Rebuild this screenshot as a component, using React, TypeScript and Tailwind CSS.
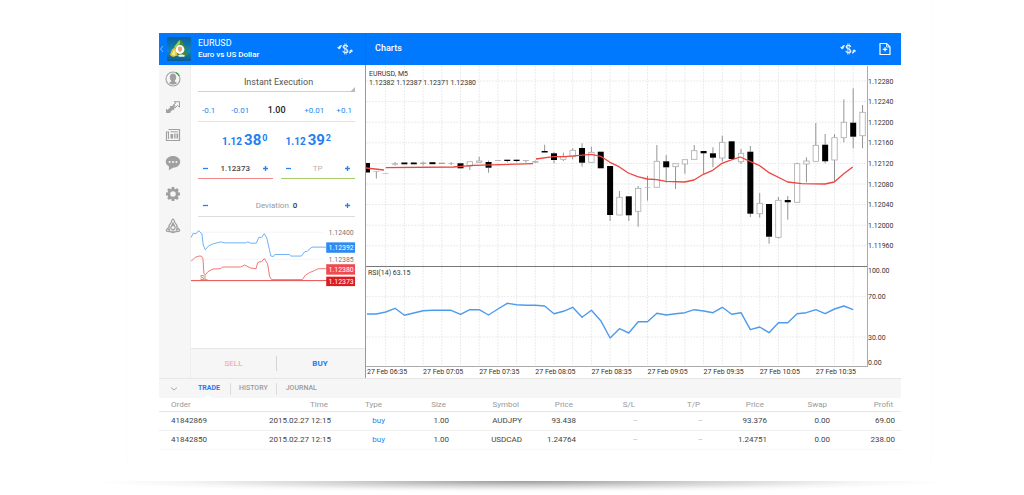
import { type ReactNode } from "react"

type Candle = {
  i: number
  top: number
  bottom: number
  high?: number
  low?: number
  fill: "down" | "up" | "flat"
}

const STEP = 9.35
const xAt = (i: number) => 1 + i * STEP

const candles: Candle[] = [
  { i: 0, top: 98, bottom: 107.5, fill: "down" },
  { i: 1, top: 106, bottom: 106.5, low: 113.5, fill: "flat" },
  { i: 2, top: 108, bottom: 108.5, fill: "flat" },
  { i: 3, top: 98.5, bottom: 99.5, high: 97, low: 100.5, fill: "flat" },
  { i: 4, top: 97.5, bottom: 99.3, fill: "down" },
  { i: 5, top: 97.5, bottom: 99.3, fill: "down" },
  { i: 6, top: 97.7, bottom: 98.8, high: 96.5, low: 100.5, fill: "flat" },
  { i: 7, top: 97.2, bottom: 99.2, fill: "down" },
  { i: 8, top: 97.7, bottom: 98.9, fill: "flat" },
  { i: 9, top: 98.5, bottom: 99, high: 97, low: 100, fill: "flat" },
  { i: 10, top: 98.3, bottom: 103.3, fill: "down" },
  { i: 11, top: 96.7, bottom: 101, low: 105, fill: "up" },
  { i: 12, top: 96, bottom: 97.3, high: 91.7, fill: "up" },
  { i: 13, top: 97, bottom: 102.7, high: 95.5, low: 107.7, fill: "down" },
  { i: 14, top: 95.3, bottom: 96, fill: "flat" },
  { i: 15, top: 94.7, bottom: 96, low: 97.3, fill: "down" },
  { i: 16, top: 94.7, bottom: 96, low: 97, fill: "down" },
  { i: 17, top: 95.3, bottom: 96, low: 97.5, fill: "flat" },
  { i: 18, top: 96.3, bottom: 97.5, high: 95.5, low: 98, fill: "flat" },
  { i: 19, top: 86, bottom: 87.5, high: 79.7, fill: "down" },
  { i: 20, top: 88.3, bottom: 95, high: 87, low: 98.3, fill: "down" },
  { i: 21, top: 91.7, bottom: 94.3, high: 87.7, low: 96, fill: "up" },
  { i: 22, top: 85.3, bottom: 91.7, high: 83.3, low: 94.3, fill: "up" },
  { i: 23, top: 83, bottom: 97.7, high: 78.3, low: 101.7, fill: "down" },
  { i: 24, top: 87.3, bottom: 97.3, high: 81.7, fill: "up" },
  { i: 25, top: 86.7, bottom: 103.3, fill: "down" },
  { i: 26, top: 101, bottom: 150, low: 156, fill: "down" },
  { i: 27, top: 132.3, bottom: 150, high: 126, fill: "up" },
  { i: 28, top: 131.3, bottom: 150.3, low: 156, fill: "down" },
  { i: 29, top: 123.3, bottom: 146.3, high: 121, low: 161.7, fill: "up" },
  { i: 30, top: 122.5, bottom: 123, high: 111, low: 135.7, fill: "flat" },
  { i: 31, top: 96.3, bottom: 122.3, high: 80, fill: "up" },
  { i: 32, top: 96.3, bottom: 102.3, high: 90, low: 117.7, fill: "down" },
  { i: 33, top: 98.7, bottom: 101.7, low: 124, fill: "up" },
  { i: 34, top: 94.7, bottom: 99, low: 108.7, fill: "up" },
  { i: 35, top: 85.7, bottom: 94.3, high: 80, fill: "up" },
  { i: 36, top: 86, bottom: 88.3, low: 108.7, fill: "down" },
  { i: 37, top: 88.3, bottom: 92.7, high: 82.3, low: 102.3, fill: "down" },
  { i: 38, top: 77.3, bottom: 93, high: 70.7, low: 96.7, fill: "up" },
  { i: 39, top: 76.3, bottom: 94, fill: "down" },
  { i: 40, top: 88.3, bottom: 96.7, high: 84, low: 99, fill: "up" },
  { i: 41, top: 86.7, bottom: 148.7, high: 81, low: 152, fill: "down" },
  { i: 42, top: 138.3, bottom: 148.7, high: 128, low: 152.7, fill: "up" },
  { i: 43, top: 139, bottom: 171.7, low: 178.7, fill: "down" },
  { i: 44, top: 135.3, bottom: 172.3, high: 132, low: 173.5, fill: "up" },
  { i: 45, top: 135, bottom: 137.3, high: 131, low: 154.7, fill: "down" },
  { i: 46, top: 98.7, bottom: 137.3, high: 97.7, fill: "up" },
  { i: 47, top: 96, bottom: 99, high: 92.3, low: 117.3, fill: "up" },
  { i: 48, top: 80.3, bottom: 96.3, high: 58, fill: "up" },
  { i: 49, top: 79.7, bottom: 96.3, high: 69, low: 98.3, fill: "down" },
  { i: 50, top: 72.7, bottom: 95, high: 69.3, low: 116.7, fill: "up" },
  { i: 51, top: 57.3, bottom: 72.7, high: 34.3, low: 77.3, fill: "up" },
  { i: 52, top: 57.7, bottom: 71.7, high: 23.3, low: 83.3, fill: "down" },
  { i: 53, top: 47.3, bottom: 70.7, high: 40, low: 83.3, fill: "up" },
]

const rsi = [
  249, 249, 247, 243.3, 250.3, 248, 245.7, 245.3, 245.3, 245.3, 249.3, 244.7, 244.7, 250, 244,
  238.3, 239.7, 240.3, 240.3, 241, 248.7, 246.3, 242.3, 252.3, 245.3, 255.7, 273, 263.7, 268,
  256.7, 256.7, 248.3, 250, 248.7, 247.7, 244.7, 246, 247.7, 242.3, 249.3, 247.7, 264.7, 262,
  267.7, 257.7, 257.7, 248.7, 247.7, 244.7, 248.7, 244, 241, 244.7,
]

const priceLevels = [
  "1.12280",
  "1.12240",
  "1.12200",
  "1.12160",
  "1.12120",
  "1.12080",
  "1.12040",
  "1.12000",
  "1.11960",
]

const times = ["06:35", "07:05", "07:35", "08:05", "08:35", "09:05", "09:35", "10:05", "10:35"]

const rsiLevels = [
  { label: "100.00", y: 208 },
  { label: "70.00", y: 234 },
  { label: "30.00", y: 275 },
  { label: "0.00", y: 300 },
]

const columns = [
  "Order",
  "Time",
  "Type",
  "Size",
  "Symbol",
  "Price",
  "S/L",
  "T/P",
  "Price",
  "Swap",
  "Profit",
]

const positions = [
  ["41842869", "2015.02.27 12:15", "buy", "1.00", "AUDJPY", "93.438", "–", "–", "93.376", "0.00", "69.00"],
  ["41842850", "2015.02.27 12:15", "buy", "1.00", "USDCAD", "1.24764", "–", "–", "1.24751", "0.00", "238.00"],
]

export default function App() {
  return (
    <main className="min-h-screen overflow-x-hidden bg-white pr-[92px] pl-[126px] font-[Roboto,'Liberation_Sans',sans-serif] text-[#444]">
      <div className="rounded-b-[26px] border-x border-[#fcfcfc] bg-white pt-[33px] pr-[30px] pb-[31px] pl-8">
        <TopBar />
        <div className="flex">
          <Sidebar />
          <OrderPanel />
          <div className="min-w-0 flex-1 border-l border-[#999]">
            <PriceChart />
          </div>
        </div>
        <Terminal />
      </div>
      <div
        aria-hidden="true"
        className="-mr-5 -ml-9 h-[11px] bg-[radial-gradient(ellipse_50%_100%_at_50%_0%,#9c9c9c_0%,#d4d4d4_45%,#f6f6f6_80%,#ffffff_100%)]"
      />
    </main>
  )
}

function TopBar() {
  return (
    <header className="flex h-8 bg-[#0079fe] text-white">
      <div className="flex w-[207px] shrink-0 items-center border-r border-[#0a6fe0] pr-3">
        <button type="button" aria-label="Back" className="w-2">
          <svg viewBox="0 0 8 12" className="h-3 w-2" fill="none" stroke="#7fbcff">
            <path d="M4 3 1.5 6 4 9" />
          </svg>
        </button>
        <AppLogo />
        <div className="ml-[7px] flex-1">
          <h1 className="text-[9px] leading-[12px] font-normal">EURUSD</h1>
          <p className="text-[8px] leading-[12px] font-medium">Euro vs US Dollar</p>
        </div>
        <button type="button" aria-label="Switch symbol">
          <CurrencyIcon />
        </button>
      </div>
      <div className="flex flex-1 items-center gap-[22px] pr-[9px] pl-[9px]">
        <h2 className="flex-1 text-[9px] font-medium">Charts</h2>
        <button type="button" aria-label="Select symbol">
          <CurrencyIcon />
        </button>
        <button type="button" aria-label="New order">
          <svg viewBox="0 0 14 14" className="size-[14px]" fill="none" stroke="#fff" strokeWidth="1.2">
            <path d="M2 1.5h6.5L12 5v7.5H2z" strokeLinejoin="round" />
            <path d="M8.5 1.5V5H12" strokeWidth="0.8" />
            <path d="M7 5.2v4.4M4.8 7.4h4.4" />
          </svg>
        </button>
      </div>
    </header>
  )
}

function CurrencyIcon() {
  return (
    <svg viewBox="0 0 16 14" className="h-[14px] w-4" fill="none" stroke="#e6f2ff" strokeLinecap="round">
      <path d="M10.6 4.4C10 3.2 6.2 2.9 6.2 5c0 2.1 4.6 1.5 4.6 3.9 0 2.2-4.2 2-4.8.5" strokeWidth="1.2" />
      <path d="M7.700 1.800v10.400M9.200 1.800v10.400" strokeWidth="0.7" />
      <path d="M4.200 3.800C3.100 4 2.300 4.800 2.200 6" strokeWidth="1.400" />
      <path d="M.9 5.600 2.200 7l1.500-1.400z" strokeWidth="0.8" fill="#e6f2ff" />
      <path d="M12.600 10.800c1-.3 1.500-1 1.600-2" strokeWidth="1.400" />
      <path d="M12.900 9l1.300-1.300L15.500 9z" strokeWidth="0.8" fill="#e6f2ff" />
    </svg>
  )
}

function AppLogo() {
  return (
    <svg viewBox="0 0 24 24" className="size-6" role="img" aria-label="Trading app">
      <defs>
        <linearGradient id="logo-sky" x1="0" y1="0" x2="0" y2="1">
          <stop offset="0" stopColor="#0d5f9c" />
          <stop offset="0.6" stopColor="#1487b9" />
          <stop offset="1" stopColor="#0c5b8e" />
        </linearGradient>
      </defs>
      <rect width="24" height="24" rx="1" fill="url(#logo-sky)" />
      <path d="M12.500 2.500c2.500 1 3.500 2.500 4 4.500l3 4.500-1 1.500 2.500 5-3.500 1.500-9-.5L5.500 13l3-5c1-1 2.500-3 4-5.500z" fill="#3d8a3f" />
      <path d="M12.500 3c.8 2 .8 4-.5 5.500l-3.500 3L7 10z" fill="#9ccb55" />
      <path d="M2.800 18 5 12.500l2.500-2 2.300 3 .7 5-4.500 1.500z" fill="#dcc236" />
      <path d="M4.500 17.500 7 12.800l1.500 2-.5 4.200z" fill="#f7ea7a" />
      <circle cx="13" cy="12.500" r="4.400" fill="#fff" />
      <path d="M13 9.500c1.800 0 2.300 1.800 2 3.600l-2 2.400-2-2.400c-.3-1.800.2-3.600 2-3.600z" fill="#eda07c" />
      <path d="M11 18.500c1-1.500 5.500-1.500 7 0l-.8 1.200H12z" fill="#f3f3ec" />
    </svg>
  )
}

function Sidebar() {
  return (
    <nav className="flex w-[31px] shrink-0 flex-col items-center gap-3 bg-[#f6f6f6] pt-[6px] pr-[3px]">
      <SideButton label="Accounts">
        <circle cx="8" cy="8" r="7" fill="none" stroke="#a0a0a0" strokeWidth="1.1" />
        <path d="M8 2.600c2 0 3.200 1.500 3.200 3.600 0 1.700-.8 3-1.600 3.700.3 1 1.600 1.200 2.600 1.800-2 2.500-6.400 2.500-8.400 0 1-.6 2.300-.8 2.600-1.800-.8-.7-1.600-2-1.600-3.700C4.800 4.100 6 2.600 8 2.600z" />
        <path d="M11 1.700a7 7 0 0 1 3.200 3.200" fill="none" stroke="#3fa34a" strokeWidth="1.300" />
      </SideButton>
      <SideButton label="Trade">
        <path d="M1 14V9.500l1.500 1.400L5.500 8 4.500 7H9.200v4.500L8 10.400l-3 2.900.9.700z" />
        <path d="M9 2.700h5.500v5.500l-1.900-1.800-2.700 2.700V6.300H7.800l3-2z" fill="none" stroke="#a0a0a0" />
      </SideButton>
      <SideButton label="News">
        <path d="M3.500 2.500h11v11h-13V5h2" fill="none" stroke="#a0a0a0" strokeWidth="1.200" />
        <path d="M3.500 4.500v7.500M5.500 4.800h7.300" fill="none" stroke="#a0a0a0" />
        <path d="M5.500 7h2.600v4.500H5.500zM9.200 6.500h1.400v5H9.200zM11.500 6.500h1.600v5h-1.600z" />
      </SideButton>
      <SideButton label="Chat">
        <path
          fillRule="evenodd"
          d="M8 .9c4.200 0 7.200 2.500 7.200 5.900S12.200 12.700 8 12.700L3.800 15.300l.2-3.700C2 10.500.8 8.800.8 6.800.8 3.400 3.800.9 8 .9zM4.600 5.900a1 1 0 1 0 0 2 1 1 0 0 0 0-2zm3.400 0a1 1 0 1 0 0 2 1 1 0 0 0 0-2zm3.400 0a1 1 0 1 0 0 2 1 1 0 0 0 0-2z"
        />
      </SideButton>
      <div className="mt-[3px]">
        <SideButton label="Settings">
          <circle cx="8" cy="8" r="4.200" fill="none" stroke="#a0a0a0" strokeWidth="2.800" />
          <path
            d="M8 1v2.500M8 12.500V15M1 8h2.500M12.500 8H15M3.050 3.050l1.800 1.800M11.150 11.150l1.800 1.800M3.050 12.950l1.800-1.800M11.150 4.850l1.800-1.800"
            fill="none"
            stroke="#a0a0a0"
            strokeWidth="2.800"
          />
        </SideButton>
      </div>
      <div className="mt-1">
        <SideButton label="About">
          <path
            d="M8 1c1.400 1 1.700 2.200 1.900 3.600L12 7.300l-.4 1.200 3.200 3.800-.9 1.200-3 .2L8 14.700l-2.900-1-3-.2-.9-1.200 3.200-3.800L4 7.300l2.100-2.700C6.300 3.200 6.600 2 8 1z"
            fill="none"
            stroke="#a0a0a0"
            strokeWidth="1.200"
          />
          <path d="M8 3.500 9.800 7H6.200zM4.500 9.500l.9 3.500-2.900-.7zM11.500 9.500l-.9 3.500 2.900-.7z" />
          <circle cx="8" cy="9.500" r="2.100" fill="none" stroke="#a0a0a0" strokeWidth="1.200" />
          <path d="M5.800 13.800c.8-1.600 3.600-1.600 4.400 0z" />
        </SideButton>
      </div>
    </nav>
  )
}

function SideButton({ label, children }: { label: string; children: ReactNode }) {
  return (
    <button type="button" aria-label={label} className="block">
      <svg viewBox="0 0 16 16" className="size-4" fill="#a0a0a0">
        {children}
      </svg>
    </button>
  )
}

function OrderPanel() {
  return (
    <section className="flex w-[175px] shrink-0 flex-col border-l border-[#eee] bg-white">
      <form onSubmit={(event) => event.preventDefault()} className="pt-2 pr-[10px] pl-[7px]">
        <div className="relative">
          <select
            aria-label="Execution type"
            className="block h-[19px] w-full appearance-none border-b border-[#d0d0d0] bg-transparent pt-px pl-1 text-center text-[9px] [text-align-last:center] text-[#555]"
          >
            <option>Instant Execution</option>
          </select>
          <svg viewBox="0 0 5 5" className="absolute right-0 bottom-0 size-[5px]" fill="#bbb">
            <path d="M5 0v5H0z" />
          </svg>
        </div>

        <div className="mt-2 flex h-[22px] items-center border-b border-[#e2e2e2] pr-[3px] pl-1 text-[8px] text-[#2b85ee]">
          <div className="flex gap-4">
            <button type="button">-0.1</button>
            <button type="button">-0.01</button>
          </div>
          <output aria-label="Volume" className="flex-1 text-center text-[9px] font-medium text-[#222]">
            1.00
          </output>
          <div className="flex gap-3">
            <button type="button">+0.01</button>
            <button type="button">+0.1</button>
          </div>
        </div>

        <div className="flex h-9 items-center justify-center gap-[18px] font-bold text-[#2280ee]">
          <Quote base="1.12" pips="38" point="0" />
          <Quote base="1.12" pips="39" point="2" />
        </div>

        <div className="grid grid-cols-2 gap-2">
          <Stepper label="Stop loss" value="1.12373" line="border-[#f08a8a]" />
          <Stepper label="Take profit" placeholder="TP" line="border-[#a5cf6b]" />
        </div>

        <div className="mt-4 flex h-[22px] items-center justify-between border-b border-[#dcdcdc] px-[5px]">
          <StepButton label="Decrease deviation" sign="minus" />
          <span className="text-[8px] text-[#999]">
            Deviation <span className="ml-[2px] font-medium text-[#333]">0</span>
          </span>
          <StepButton label="Increase deviation" sign="plus" />
        </div>
      </form>

      <TickChart />

      <div className="mt-auto grid h-[30px] grid-cols-2 border-t border-[#e8e8e8] bg-[#f6f6f6] pr-[2px] text-[8px]">
        <button type="button" className="my-[7px] border-r border-[#d4d4d4] text-[#f2a0a0]">
          SELL
        </button>
        <button type="button" className="font-bold text-[#1f7df0]">
          BUY
        </button>
      </div>
    </section>
  )
}

function Quote({ base, pips, point }: { base: string; pips: string; point: string }) {
  return (
    <div className="flex items-baseline leading-none">
      <span className="text-[10px]">{base}</span>
      <span className="ml-[2px] text-[15px]">{pips}</span>
      <span className="relative -top-1 ml-px text-[9px]">{point}</span>
    </div>
  )
}

function Stepper({
  label,
  value,
  placeholder,
  line,
}: {
  label: string
  value?: string
  placeholder?: string
  line: string
}) {
  return (
    <div className={`flex h-[21px] items-center border-b px-[5px] ${line}`}>
      <StepButton label={`Decrease ${label}`} sign="minus" />
      <input
        type="text"
        aria-label={label}
        defaultValue={value}
        placeholder={placeholder}
        className="h-4 w-full min-w-0 flex-1 bg-transparent text-center text-[8px] font-medium text-[#444] outline-none placeholder:font-normal placeholder:text-[#b5b5b5]"
      />
      <StepButton label={`Increase ${label}`} sign="plus" />
    </div>
  )
}

function StepButton({ label, sign }: { label: string; sign: "plus" | "minus" }) {
  return (
    <button type="button" aria-label={label} className="shrink-0">
      <svg viewBox="0 0 5 5" className="size-[5px]" stroke="#2583ee" strokeWidth="1.3">
        <path d={sign === "plus" ? "M0 2.500h5M2.500 0v5" : "M0 2.500h5"} />
      </svg>
    </button>
  )
}

function TickChart() {
  return (
    <svg viewBox="0 0 175 78" className="w-full" role="img" aria-label="Bid and ask ticks">
      <path d="M0 15.300h133M0 42.500h133" stroke="#e4e4e4" strokeWidth="0.6" strokeDasharray="2 1" />
      <polyline
        points="0,20.700 2.300,16.300 5,17 7.700,13.700 11,17 12.300,28 14.300,33 17.700,29 22.300,27 30,25 33.300,26 55,26 57,25 59.700,26.300 65.700,26.300 68.300,20.300 71,20.700 73.700,16.700 76.300,21.300 80.300,39.300 83,39.700 84.300,37.700 99,37.700 100.300,39.300 111,39.300 114.300,35 117,34.300 121.700,30.300 136,30.300"
        fill="none"
        stroke="#6fb0f6"
      />
      <polyline
        points="0,44.700 4,40.700 8,39.300 10.500,39.300 12,42 13,57 14.500,58 17,55 22,52.300 30,52 31.500,50.300 50,50.300 54,48.300 60,51.300 65.500,52 67,46 69,45 71,45 73.700,41.700 77,47 79,59.500 81,63 112,63 115,58.500 119,56 124,54 128,52 136,52"
        fill="none"
        stroke="#f17676"
      />
      <path d="M0 64h150" stroke="#e5484d" />
      <text x="9" y="63" className="fill-[#777] text-[7px]">
        SL
      </text>
      <rect x="136" y="25.500" width="29" height="10.500" fill="#2f8bf2" />
      <rect x="136" y="47.500" width="29" height="10.500" fill="#ef4a4f" />
      <rect x="136" y="60" width="29" height="9.500" fill="#dd1c1f" />
      <g className="text-[7px]" textAnchor="middle">
        <text x="151" y="18.500" className="fill-[#777]">
          1.12400
        </text>
        <text x="151" y="33.500" className="fill-white">
          1.12392
        </text>
        <text x="151" y="45.500" className="fill-[#777]">
          1.12385
        </text>
        <text x="151" y="55.500" className="fill-white">
          1.12380
        </text>
        <text x="151" y="67.500" className="fill-white">
          1.12373
        </text>
      </g>
    </svg>
  )
}

function PriceChart() {
  return (
    <svg viewBox="0 0 535 313" className="block w-full" role="img" aria-label="EURUSD, M5 with RSI(14)">
      <g stroke="#e6e6e6" strokeWidth="0.8" strokeDasharray="2 1">
        {Array.from({ length: 26 }, (_, k) => (
          <path key={k} d={`M${xAt(2 + k * 2)} 1V302`} />
        ))}
        {priceLevels.map((level, k) => (
          <path key={level} d={`M0 ${16 + k * 20.6}H501`} />
        ))}
        <path d="M0 231.700H501M0 272H501" />
      </g>

      {candles.map((c) => (
        <CandleMark key={c.i} candle={c} />
      ))}

      <g fill="none" stroke="#ee4540" strokeWidth="1.3" strokeLinejoin="round">
        <polyline points="0,103 18,105" />
        <polyline points="19.700,102.700 87.300,102 107.300,100.300 167,98.700" />
        <polyline points="170,94 187.300,91.700 199,91.700 225.300,89.300 234.700,91.300 244,97.300 253,101.700 262.300,108 271.700,111.700 281.300,114 290.700,114.700 300,116.300 318.700,117 328,115 337.300,109.300 346.700,105.300 356,98.300 364,95.300 374.300,92 384,96.300 393.700,100.700 403,107.700 421.700,117 435.700,118.700 459,119 468.300,117 477.700,108.700 486.700,102" />
      </g>

      <polyline
        points={rsi.map((y, i) => `${xAt(i)},${y}`).join(" ")}
        fill="none"
        stroke="#4e9bee"
        strokeWidth="1.4"
        strokeLinejoin="round"
      />

      <path d="M0 201.500H501.500" stroke="#777" />
      <path d="M0 301.500H501.500M501.500 1V302" stroke="#aaa" />

      <g className="fill-[#333] text-[7px]">
        <text x="3" y="11">
          EURUSD, M5
        </text>
        <text x="3" y="20">
          1.12382 1.12387 1.12371 1.12380
        </text>
        <text x="2" y="210">
          RSI(14) 63.15
        </text>
        {priceLevels.map((level, k) => (
          <text key={level} x="502" y={18.5 + k * 20.6}>
            {level}
          </text>
        ))}
        {rsiLevels.map((level) => (
          <text key={level.label} x="502" y={level.y}>
            {level.label}
          </text>
        ))}
        {times.map((time, k) => (
          <text key={time} x={1 + k * 56.1} y="309">
            27 Feb {time}
          </text>
        ))}
      </g>
    </svg>
  )
}

function CandleMark({ candle }: { candle: Candle }) {
  const { i, top, bottom, high = top, low = bottom, fill } = candle
  const x = xAt(i)

  return (
    <g>
      <path d={`M${x} ${high}V${top}M${x} ${bottom}V${low}`} stroke="#888" strokeWidth="0.9" />
      {fill === "down" ? (
        <rect x={x - 3} y={top} width="6" height={bottom - top} fill="#000" />
      ) : fill === "up" ? (
        <rect x={x - 2.7} y={top} width="5.4" height={bottom - top} fill="#fff" stroke="#aaa" strokeWidth="0.8" />
      ) : (
        <rect x={x - 3} y={top} width="6" height={bottom - top} fill="#999" />
      )}
    </g>
  )
}

function Terminal() {
  return (
    <section>
      <div className="flex h-5 items-center border-t border-[#e6e6e6] bg-[#f6f6f6] text-[7px] font-medium text-[#999]">
        <button type="button" aria-label="Collapse" className="flex w-[29px] justify-center">
          <svg viewBox="0 0 8 4" className="h-1 w-2" fill="none" stroke="#aaa">
            <path d="M1 .5 4 3 7 .5" />
          </svg>
        </button>
        <button type="button" className="relative h-full px-[10px] font-bold text-[#1f7df0]">
          TRADE
          <svg viewBox="0 0 8 3" className="absolute bottom-0 left-4 h-[3px] w-2" fill="#fff">
            <path d="M4 0 8 3H0z" />
          </svg>
        </button>
        <button type="button" className="h-3 border-x border-[#dcdcdc] px-2">
          HISTORY
        </button>
        <button type="button" className="px-[9px]">
          JOURNAL
        </button>
      </div>

      <table className="w-full table-fixed border-collapse text-right text-[8px] leading-[10px]">
        <colgroup>
          <col />
          <col className="w-[100px]" />
          <col className="w-[54px]" />
          <col className="w-[64px]" />
          <col className="w-[73px]" />
          <col className="w-[54px]" />
          <col className="w-[62px]" />
          <col className="w-[65px]" />
          <col className="w-[64px]" />
          <col className="w-[63px]" />
          <col className="w-[71px]" />
        </colgroup>
        <thead>
          <tr className="border-b border-[#e6e6e6] text-[#999]">
            {columns.map((column, k) => (
              <th
                key={k}
                scope="col"
                className="px-[3px] pt-[2px] pb-px font-normal first:pl-3 first:text-left last:pr-2"
              >
                {column}
              </th>
            ))}
          </tr>
        </thead>
        <tbody>
          {positions.map((row) => (
            <tr key={row[0]} className="border-b border-[#eee] last:border-[#f8f8f8]">
              {row.map((cell, k) => (
                <td
                  key={k}
                  className={`py-1 whitespace-nowrap first:pl-3 first:text-left last:pr-[6px] ${
                    cell === "buy" ? "text-[#2583ee]" : cell === "–" ? "text-[#bbb]" : "text-[#444]"
                  }`}
                >
                  {cell}
                </td>
              ))}
            </tr>
          ))}
        </tbody>
      </table>
    </section>
  )
}
